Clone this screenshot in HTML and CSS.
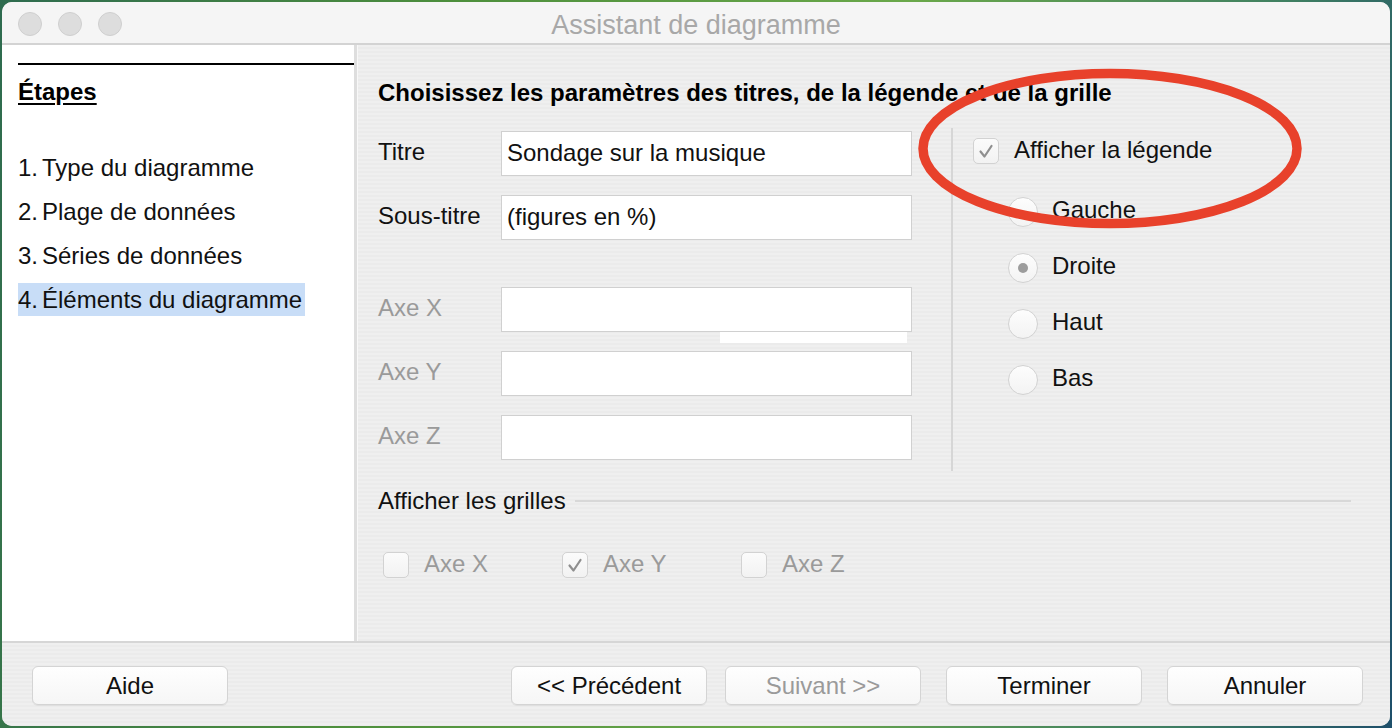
FILE: index.html
```html
<!DOCTYPE html>
<html lang="fr">
<head>
<meta charset="utf-8">
<title>Assistant de diagramme</title>
<link rel="stylesheet" href="styles.css">
</head>
<body>
<div class="window">
  <div class="titlebar">
    <div class="lights">
      <span class="light"></span><span class="light"></span><span class="light"></span>
    </div>
    <div class="title">Assistant de diagramme</div>
    <div></div>
  </div>
  <div class="main">
    <aside class="sidebar">
      <div class="rule"></div>
      <div class="steps-title">Étapes</div>
      <ul class="steps">
        <li class="step"><span class="num">1.</span>Type du diagramme</li>
        <li class="step"><span class="num">2.</span>Plage de données</li>
        <li class="step"><span class="num">3.</span>Séries de données</li>
        <li class="step active"><span class="num">4.</span>Éléments du diagramme</li>
      </ul>
    </aside>
    <section class="content">
      <h1 class="heading">Choisissez les paramètres des titres, de la légende et de la grille</h1>
      <div class="upper">
        <div class="fields">
          <div class="row"><span class="label">Titre</span><div class="field">Sondage sur la musique</div></div>
          <div class="row"><span class="label">Sous-titre</span><div class="field">(figures en %)</div></div>
          <div class="row axis-first"><span class="label disabled">Axe X</span><div class="field glitch-host"><span class="glitch"></span></div></div>
          <div class="row"><span class="label disabled">Axe Y</span><div class="field"></div></div>
          <div class="row"><span class="label disabled">Axe Z</span><div class="field"></div></div>
        </div>
        <div class="legend">
          <div class="check-row">
            <span class="box"><svg viewBox="0 0 26 26" width="26" height="26"><path d="M7.5 13.5 L11.5 18.5 L18.5 8" fill="none" stroke="#8f8f8f" stroke-width="2.2" stroke-linecap="round" stroke-linejoin="round"/></svg></span>
            <span class="check-label">Afficher la légende</span>
          </div>
          <div class="radios">
            <div class="radio-row"><span class="radio"></span><span>Gauche</span></div>
            <div class="radio-row"><span class="radio on"></span><span>Droite</span></div>
            <div class="radio-row"><span class="radio"></span><span>Haut</span></div>
            <div class="radio-row"><span class="radio"></span><span>Bas</span></div>
          </div>
        </div>
      </div>
      <div class="grid-head"><span>Afficher les grilles</span><span class="line"></span></div>
      <div class="grid-checks">
        <div class="gcheck"><span class="box"></span><span class="disabled">Axe X</span></div>
        <div class="gcheck"><span class="box"><svg viewBox="0 0 26 26" width="26" height="26"><path d="M7.5 13.5 L11.5 18.5 L18.5 8" fill="none" stroke="#8f8f8f" stroke-width="2.2" stroke-linecap="round" stroke-linejoin="round"/></svg></span><span class="disabled">Axe Y</span></div>
        <div class="gcheck"><span class="box"></span><span class="disabled">Axe Z</span></div>
      </div>
    </section>
  </div>
  <div class="footer">
    <button class="btn">Aide</button>
    <div class="spacer"></div>
    <button class="btn">&lt;&lt; Précédent</button>
    <button class="btn disabled-btn">Suivant &gt;&gt;</button>
    <button class="btn wide-gap">Terminer</button>
    <button class="btn wide-gap">Annuler</button>
  </div>
  <svg class="annotation" width="1388" height="724" viewBox="0 0 1388 724">
    <ellipse cx="1108" cy="146.5" rx="187" ry="75" fill="none" stroke="#e8412b" stroke-width="9.5"/>
  </svg>
</div>
</body>
</html>
```

FILE: styles.css
```css
* { box-sizing: border-box; }

html, body {
  margin: 0;
  padding: 0;
}

body {
  width: 1392px;
  height: 728px;
  padding: 2px 3px 2px 2px;
  background: linear-gradient(100deg, #2e6b4f 0%, #4d8f3c 30%, #6aa84a 60%, #3f7f62 85%, #1e4f6a 100%);
  font-family: "Liberation Sans", Arial, sans-serif;
  font-size: 24px;
  color: #111;
  overflow: hidden;
}

.window {
  position: relative;
  width: 1388px;
  height: 724px;
  border-radius: 10px;
  overflow: hidden;
  background: #ededed;
  display: flex;
  flex-direction: column;
}

/* Title bar */
.titlebar {
  height: 43px;
  flex: none;
  background: #f5f5f5;
  border-bottom: 2px solid #d3d3d3;
  display: grid;
  grid-template-columns: 1fr auto 1fr;
  align-items: center;
}

.lights {
  display: flex;
  gap: 16px;
  padding-left: 16px;
  padding-top: 2px;
}

.light {
  width: 24px;
  height: 24px;
  border-radius: 50%;
  background: #dddddd;
  border: 1px solid #cfcfcf;
}

.title {
  font-size: 27px;
  color: #a8a8a8;
  padding-top: 5px;
}

/* Main */
.main {
  height: 596px;
  flex: none;
  display: flex;
}

.sidebar {
  width: 355px;
  flex: none;
  background: #ffffff;
  border-right: 3px solid #dedede;
  padding-left: 16px;
}

.rule {
  margin-top: 18px;
  height: 2px;
  background: #000;
}

.steps-title {
  margin-top: 13px;
  font-weight: bold;
  text-decoration: underline;
  text-underline-offset: 3px;
  line-height: 28px;
  color: #000;
}

.steps {
  list-style: none;
  margin: 45px 0 0 0;
  padding: 0;
}

.step {
  display: block;
  width: fit-content;
  height: 33px;
  line-height: 33px;
  margin-bottom: 11px;
  padding-right: 3px;
  color: #111;
}

.step .num {
  margin-right: 4px;
}

.step.active {
  background: #c8ddf7;
}

.content {
  flex: 1;
  padding: 34px 39px 0 20px;
  background: repeating-linear-gradient(to bottom, #efefef 0, #efefef 2px, #ebebeb 2px, #ebebeb 4px);
  border-left: 1px solid #f8f8f8;
}

.heading {
  margin: 0;
  font-size: 24px;
  font-weight: bold;
  line-height: 28px;
  color: #000;
  white-space: nowrap;
}

.upper {
  margin-top: 21px;
  display: flex;
}

.fields {
  width: 534px;
  padding-top: 3px;
  display: flex;
  flex-direction: column;
  gap: 19px;
}

.row {
  display: flex;
  align-items: center;
}

.row.axis-first {
  margin-top: 28px;
}

.label {
  width: 123px;
  flex: none;
  color: #111;
  padding-bottom: 3px;
}

.label.disabled, .disabled {
  color: #9a9a9a;
}

.field {
  width: 411px;
  height: 45px;
  background: #fff;
  border: 1px solid #d0d0d0;
  padding-left: 5px;
  line-height: 41px;
  color: #111;
  white-space: nowrap;
}

.glitch-host {
  position: relative;
}

.glitch {
  position: absolute;
  left: 218px;
  top: 44px;
  width: 187px;
  height: 11px;
  background: #fff;
}

.legend {
  margin-left: 39px;
  height: 343px;
  border-left: 2px solid #d6d6d6;
  padding: 9px 0 0 20px;
  flex: 1;
}

.check-row {
  display: flex;
  align-items: center;
  height: 27px;
  gap: 15px;
}

.box {
  width: 26px;
  height: 26px;
  flex: none;
  border: 1px solid #d2d2d2;
  border-radius: 5px;
  background: linear-gradient(#fbfbfb, #f2f2f2);
  display: flex;
  align-items: center;
  justify-content: center;
  overflow: hidden;
}

.box svg {
  display: block;
  flex: none;
}

.check-label {
  color: #111;
  padding-bottom: 2px;
}

.radios {
  margin: 18px 0 0 35px;
}

.radio-row {
  height: 56px;
  display: flex;
  align-items: center;
  gap: 14px;
  color: #111;
}

.radio {
  width: 30px;
  height: 30px;
  flex: none;
  border-radius: 50%;
  border: 1px solid #d2d2d2;
  background: linear-gradient(#fdfdfd, #f3f3f3);
  display: flex;
  align-items: center;
  justify-content: center;
  margin-top: 4px;
}

.radio.on::after {
  content: "";
  width: 10px;
  height: 10px;
  border-radius: 50%;
  background: #9c9c9c;
}

.grid-head {
  margin-top: 16px;
  display: flex;
  align-items: center;
  line-height: 28px;
  color: #111;
}

.grid-head .line {
  flex: 1;
  height: 2px;
  background: #d8d8d8;
  margin-left: 9px;
}

.grid-checks {
  margin-top: 35px;
  padding-left: 5px;
  display: flex;
}

.gcheck {
  width: 179px;
  display: flex;
  align-items: center;
  gap: 15px;
}

.gcheck .disabled {
  padding-bottom: 2px;
}

/* Footer */
.footer {
  flex: 1;
  border-top: 2px solid #d6d6d6;
  background: repeating-linear-gradient(to bottom, #efefef 0, #efefef 2px, #ebebeb 2px, #ebebeb 4px);
  display: flex;
  align-items: flex-start;
  padding: 23px 27px 0 30px;
}

.spacer {
  flex: 1;
}

.btn {
  width: 196px;
  height: 39px;
  margin: 0 0 0 18px;
  border: 1px solid #d4d4d4;
  border-radius: 6px;
  background: linear-gradient(#fefefe, #f6f6f6);
  box-shadow: 0 1px 0 rgba(0,0,0,0.05);
  font-family: "Liberation Sans", Arial, sans-serif;
  font-size: 24px;
  color: #111;
  padding: 0;
}

.btn:first-child {
  margin-left: 0;
}

.btn.wide-gap {
  margin-left: 25px;
}

.btn.disabled-btn {
  color: #9a9a9a;
}

.annotation {
  position: absolute;
  left: 0;
  top: 0;
  pointer-events: none;
}
```
